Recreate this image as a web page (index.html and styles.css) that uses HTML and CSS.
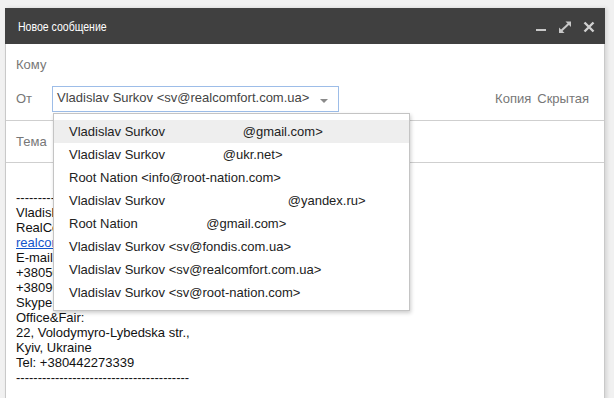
FILE: index.html
```html
<!DOCTYPE html>
<html lang="ru">
<head>
  <meta charset="UTF-8">
  <title>Новое сообщение</title>
  <link rel="stylesheet" href="styles.css">
</head>
<body>
  <div class="compose">
    <div class="compose-head">
      <span class="compose-title">Новое сообщение</span>
      <div class="head-icons">
        <!-- minimize -->
        <svg width="12" height="12" viewBox="0 0 12 12"><rect x="1" y="8" width="10" height="2" fill="#c8c8c8"/></svg>
        <!-- full screen -->
        <svg width="14" height="13" viewBox="0 0 14 13">
          <path d="M13 0.5 L7.5 0.5 L13 6 Z" fill="#c8c8c8"/>
          <path d="M1 12 L1 6.5 L6.5 12 Z" fill="#c8c8c8"/>
          <path d="M3 10 L11 2.5" stroke="#c8c8c8" stroke-width="2"/>
        </svg>
        <!-- close -->
        <svg width="12" height="12" viewBox="0 0 12 12"><path d="M1.5 1.5 L10.5 10.5 M10.5 1.5 L1.5 10.5" stroke="#d0d0d0" stroke-width="2.4"/></svg>
      </div>
    </div>

    <div class="compose-main">
      <div class="field field-to">
        <span class="field-label">Кому</span>
      </div>

      <div class="field field-from">
        <span class="field-label">От</span>
        <div class="from-select">
          <span class="from-value">Vladislav Surkov &lt;sv@realcomfort.com.ua&gt;</span>
          <span class="caret"></span>
          <!-- open list of sender addresses -->
          <ul class="from-menu">
            <li class="active">Vladislav Surkov <span class="gap gap-gmail"></span>@gmail.com&gt;</li>
            <li>Vladislav Surkov <span class="gap gap-ukr"></span>@ukr.net&gt;</li>
            <li>Root Nation &lt;info@root-nation.com&gt;</li>
            <li>Vladislav Surkov <span class="gap gap-yandex"></span>@yandex.ru&gt;</li>
            <li>Root Nation <span class="gap gap-root"></span>@gmail.com&gt;</li>
            <li>Vladislav Surkov &lt;sv@fondis.com.ua&gt;</li>
            <li>Vladislav Surkov &lt;sv@realcomfort.com.ua&gt;</li>
            <li>Vladislav Surkov &lt;sv@root-nation.com&gt;</li>
          </ul>
        </div>
        <div class="cc-links">
          <span>Копия</span>
          <span>Скрытая</span>
        </div>
      </div>

      <div class="field field-subject">
        <span class="field-label">Тема</span>
      </div>

      <div class="compose-body">
        <div>----------------------------------------</div>
        <div>Vladislav Surkov</div>
        <div>RealComfort</div>
        <div><a href="#">realcomfort.com.ua</a></div>
        <div>E-mail: sv@realcomfort.com.ua</div>
        <div>+380503000000</div>
        <div>+380960000000</div>
        <div>Skype: vladislav.surkov</div>
        <div>Office&amp;Fair:</div>
        <div>22, Volodymyro-Lybedska str.,</div>
        <div>Kyiv, Ukraine</div>
        <div>Tel: +380442273339</div>
        <div>----------------------------------------</div>
      </div>
    </div>
  </div>
</body>
</html>
```

FILE: styles.css
```css
html, body {
  margin: 0;
  padding: 0;
  height: 100%;
  overflow: hidden;
}
body {
  background: #f1f1f1;
  font-family: "Liberation Sans", Arial, sans-serif;
  font-size: 13px;
  color: #222;
}
.compose {
  width: 600px;
  margin: 8px 0 0 5px;
  height: 400px;
  display: flex;
  flex-direction: column;
  box-shadow: 2px 0 4px rgba(0,0,0,0.12);
}
.compose-head {
  height: 36px;
  flex: 0 0 36px;
  background: #404040;
  display: flex;
  align-items: center;
  justify-content: space-between;
  padding: 0 10px 0 13px;
}
.compose-title {
  display: inline-block;
  color: #fff;
  font-size: 13.5px;
  padding-top: 1px;
  /* the title font in Gmail is condensed */
  transform: scaleX(0.78);
  transform-origin: left center;
}
.head-icons {
  display: flex;
  align-items: center;
  gap: 11px;
  padding-top: 2px;
}
.head-icons svg {
  display: block;
}
.compose-main {
  flex: 1;
  background: #fff;
  border-left: 1px solid #c9c9c9;
  border-right: 1px solid #c9c9c9;
}
.field {
  display: flex;
  align-items: center;
  padding: 0 10px;
}
.field-label {
  color: #777;
  width: 36px;
  flex: 0 0 36px;
}
.field-to {
  height: 40px;
}
.field-from {
  align-items: flex-start;
  padding-top: 2px;
  box-sizing: border-box;
  border-bottom: 1px solid #cfcfcf;
  height: 37px;
}
.field-from .field-label {
  padding-top: 5px;
}
.from-select {
  position: relative;
  width: 287px;
  height: 26px;
  box-sizing: border-box;
  border: 1px solid #9dbde8;
  display: flex;
  align-items: flex-start;
  padding: 3px 0 0 4px;
  color: #444;
}
.from-value {
  flex: 1;
}
.caret {
  width: 0;
  height: 0;
  margin: 9px 10px 0 0;
  border-left: 4px solid transparent;
  border-right: 4px solid transparent;
  border-top: 4px solid #8a8a8a;
}
.from-menu {
  position: absolute;
  top: 26px;
  left: 0;
  width: 357px;
  box-sizing: border-box;
  margin: 0;
  padding: 6px 0;
  list-style: none;
  background: #fff;
  border: 1px solid #c4c4c4;
  box-shadow: 1px 2px 4px rgba(0,0,0,0.2);
  z-index: 2;
  color: #222;
}
.from-menu li {
  height: 23px;
  line-height: 23px;
  padding-left: 15px;
  white-space: nowrap;
}
.from-menu li.active {
  background: #eee;
}
.gap {
  display: inline-block;
}
.gap-gmail { width: 74px; }
.gap-ukr { width: 54px; }
.gap-yandex { width: 119px; }
.gap-root { width: 65px; }
.cc-links {
  margin-left: auto;
  margin-right: 5px;
  display: flex;
  gap: 6px;
  color: #777;
  padding-top: 5px;
}
.field-subject {
  height: 41px;
  border-bottom: 1px solid #cfcfcf;
}
.compose-body {
  padding: 27px 10px 0 10px;
  line-height: 15px;
  color: #111;
}
.compose-body a {
  color: #15c;
}
```
